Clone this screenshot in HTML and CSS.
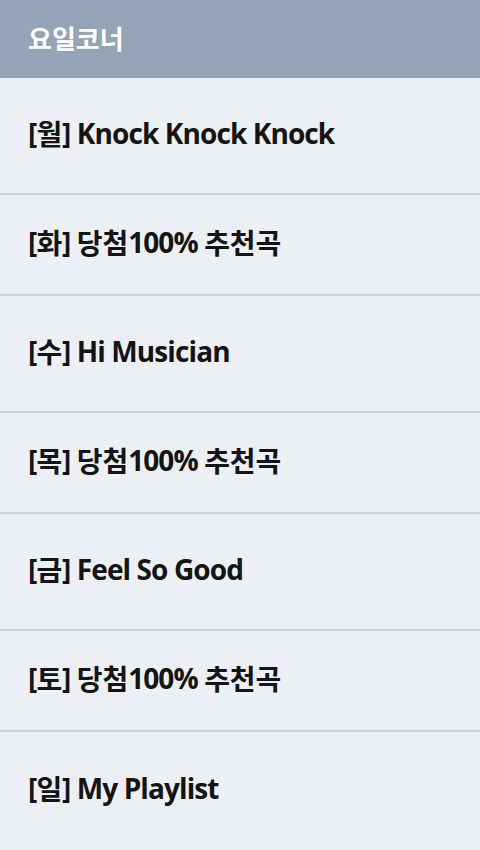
FILE: index.html
```html
<!DOCTYPE html>
<html lang="ko">
<head>
<meta charset="utf-8">
<link rel="stylesheet" href="styles.css">
</head>
<body>
<header class="top">요일코너</header>
<ul class="list">
  <li class="item tall">[<span class="ko">월</span>] Knock Knock Knock</li>
  <li class="item short">[<span class="ko">화</span>] <span class="ko">당첨</span>100% <span class="ko">추천곡</span></li>
  <li class="item tall">[<span class="ko">수</span>] Hi Musician</li>
  <li class="item short">[<span class="ko">목</span>] <span class="ko">당첨</span>100% <span class="ko">추천곡</span></li>
  <li class="item tall">[<span class="ko">금</span>] Feel So Good</li>
  <li class="item short">[<span class="ko">토</span>] <span class="ko">당첨</span>100% <span class="ko">추천곡</span></li>
  <li class="item tall">[<span class="ko">일</span>] My Playlist</li>
</ul>
</body>
</html>
```
FILE: styles.css
```css
html, body {
  margin: 0;
  padding: 0;
  background: #eceff3;
}
body {
  width: 480px;
  height: 850px;
  overflow: hidden;
  font-family: "Open Sans", "Noto Sans CJK KR", sans-serif;
}
.top {
  height: 78px;
  box-sizing: border-box;
  background: #94a3b5;
  color: #ffffff;
  font-family: "Noto Sans CJK KR", sans-serif;
  font-weight: 700;
  font-size: 26px;
  display: flex;
  align-items: center;
  padding: 0 28px 4px;
}
.list {
  list-style: none;
  margin: 0;
  padding: 0;
}
.item {
  box-sizing: border-box;
  display: flex;
  align-items: center;
  white-space: pre;
  padding: 0 28px 6px;
  font-size: 28px;
  font-weight: 700;
  color: #141414;
  letter-spacing: -0.9px;
  border-bottom: 2px solid #cdd2d8;
}
.ko {
  letter-spacing: -0.1px;
}
.tall { height: 117px; }
.short { height: 101px; }
.item:last-child { border-bottom: none; }
```
